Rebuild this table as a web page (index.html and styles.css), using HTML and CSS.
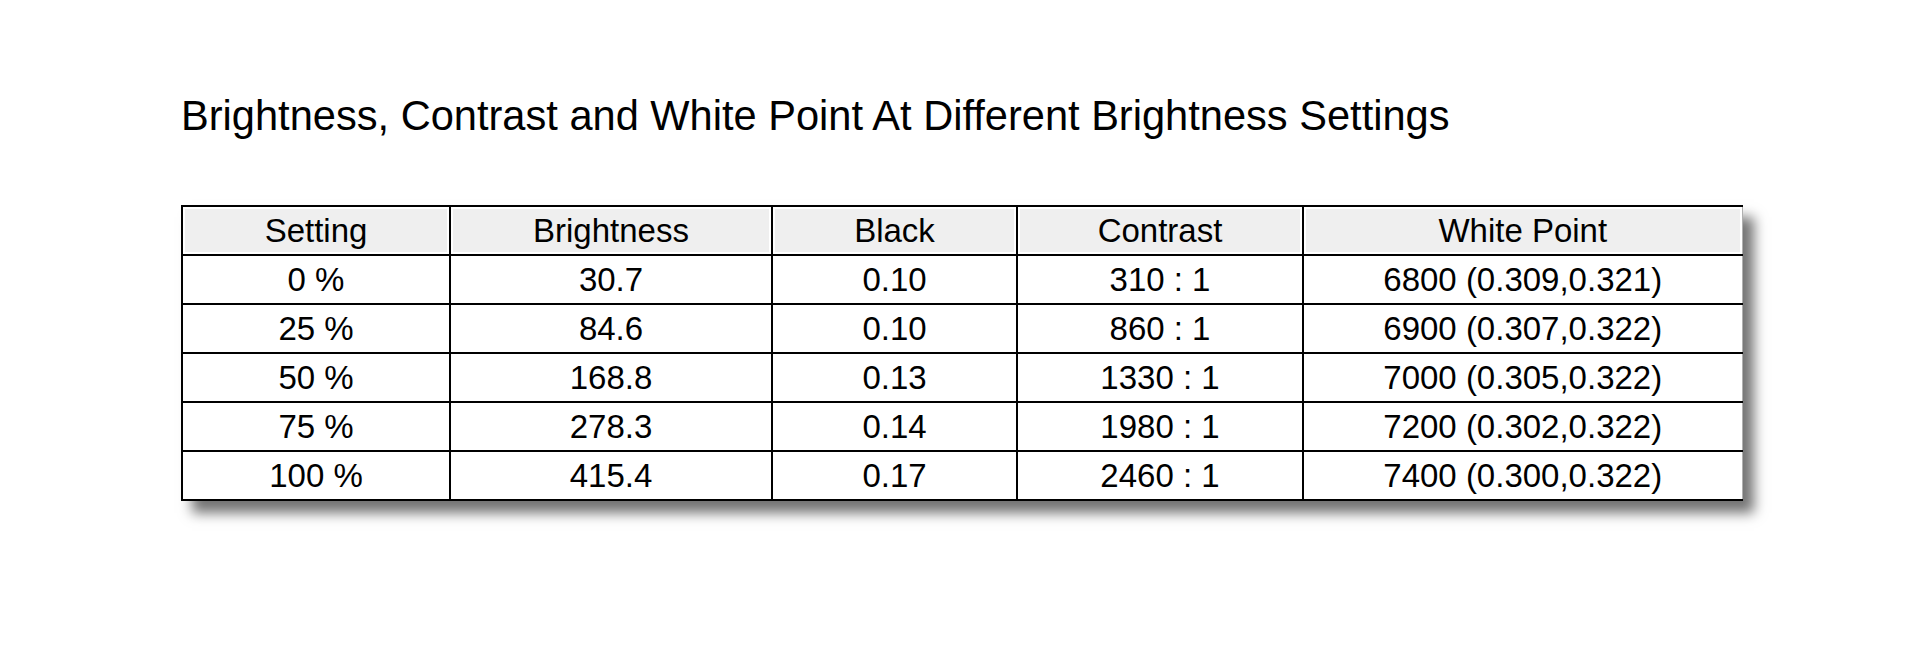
FILE: index.html
```html
<!DOCTYPE html>
<html>
<head>
<meta charset="utf-8">
<link rel="stylesheet" href="styles.css">
</head>
<body>
<div class="page">
  <h1 class="title">Brightness, Contrast and White Point At Different Brightness Settings</h1>
  <div class="table-wrap">
    <table class="data">
      <colgroup>
        <col class="c1"><col class="c2"><col class="c3"><col class="c4"><col class="c5">
      </colgroup>
      <thead>
        <tr><th>Setting</th><th>Brightness</th><th>Black</th><th>Contrast</th><th>White Point</th></tr>
      </thead>
      <tbody>
        <tr><td>0 %</td><td>30.7</td><td>0.10</td><td>310 : 1</td><td>6800 (0.309,0.321)</td></tr>
        <tr><td>25 %</td><td>84.6</td><td>0.10</td><td>860 : 1</td><td>6900 (0.307,0.322)</td></tr>
        <tr><td>50 %</td><td>168.8</td><td>0.13</td><td>1330 : 1</td><td>7000 (0.305,0.322)</td></tr>
        <tr><td>75 %</td><td>278.3</td><td>0.14</td><td>1980 : 1</td><td>7200 (0.302,0.322)</td></tr>
        <tr><td>100 %</td><td>415.4</td><td>0.17</td><td>2460 : 1</td><td>7400 (0.300,0.322)</td></tr>
      </tbody>
    </table>
  </div>
</div>
</body>
</html>
```
FILE: styles.css
```css
html, body {
  margin: 0;
  padding: 0;
  background: #ffffff;
}
.page {
  padding: 93px 0 60px 181px;
  font-family: "Liberation Sans", Arial, sans-serif;
  color: #000;
}
.title {
  margin: 0 0 66px 0;
  font-size: 41.6px;
  font-weight: normal;
  line-height: 46px;
}
.table-wrap {
  display: inline-block;
  vertical-align: top;
  box-shadow: 11px 12px 12px rgba(0, 0, 0, 0.55);
}
.data {
  border-collapse: collapse;
  table-layout: fixed;
  width: 1560px;
  font-size: 33px;
  background: #fff;
}
.c1 { width: 268px; }
.c2 { width: 322px; }
.c3 { width: 245px; }
.c4 { width: 286px; }
.c5 { width: 439px; }
.data th,
.data td {
  border: 2px solid #000;
  height: 47px;
  padding: 0;
  text-align: center;
  font-weight: normal;
  line-height: 47px;
  background: #fff;
}
.data th {
  background: #efefef;
  box-shadow: inset 0 0 0 2px #fff;
}
.data th:last-child,
.data td:last-child {
  border-right: 1px solid #b0b0b0;
}
```
